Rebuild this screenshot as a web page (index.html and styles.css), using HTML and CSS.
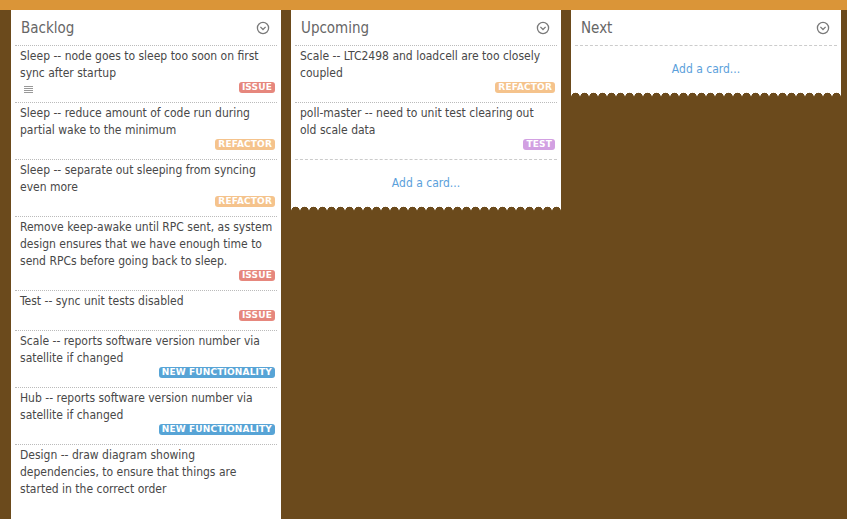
FILE: index.html
```html
<!DOCTYPE html>
<html>
<head>
<meta charset="utf-8">
<link rel="stylesheet" href="styles.css">
</head>
<body>
<div class="topbar"></div>
<div class="board">
  <section class="list list-tall">
    <header class="list-head"><h2>Backlog</h2><svg class="chev" viewBox="0 0 14 14"><circle cx="7" cy="7" r="5.6"/><path d="M4.4 5.9 L7 8.5 L9.6 5.9"/></svg></header>
    <div class="card"><p>Sleep -- node goes to sleep too soon on first sync after startup</p><div class="meta"><span class="desc"><i></i><i></i><i></i><i></i></span><span class="lbl issue">ISSUE</span></div></div>
    <div class="card"><p>Sleep -- reduce amount of code run during partial wake to the minimum</p><div class="meta"><span class="lbl refactor">REFACTOR</span></div></div>
    <div class="card"><p>Sleep -- separate out sleeping from syncing even more</p><div class="meta"><span class="lbl refactor">REFACTOR</span></div></div>
    <div class="card"><p>Remove keep-awake until RPC sent, as system design ensures that we have enough time to send RPCs before going back to sleep.</p><div class="meta"><span class="lbl issue">ISSUE</span></div></div>
    <div class="card"><p>Test -- sync unit tests disabled</p><div class="meta"><span class="lbl issue">ISSUE</span></div></div>
    <div class="card"><p>Scale -- reports software version number via satellite if changed</p><div class="meta"><span class="lbl newf">NEW FUNCTIONALITY</span></div></div>
    <div class="card"><p>Hub -- reports software version number via satellite if changed</p><div class="meta"><span class="lbl newf">NEW FUNCTIONALITY</span></div></div>
    <div class="card"><p>Design -- draw diagram showing dependencies, to ensure that things are started in the correct order</p></div>
  </section>
  <section class="list">
    <header class="list-head"><h2>Upcoming</h2><svg class="chev" viewBox="0 0 14 14"><circle cx="7" cy="7" r="5.6"/><path d="M4.4 5.9 L7 8.5 L9.6 5.9"/></svg></header>
    <div class="card"><p>Scale -- LTC2498 and loadcell are too closely coupled</p><div class="meta"><span class="lbl refactor">REFACTOR</span></div></div>
    <div class="card"><p>poll-master -- need to unit test clearing out<br>old scale data</p><div class="meta"><span class="lbl test">TEST</span></div></div>
    <div class="add">Add a card...</div>
    <div class="wave"></div>
  </section>
  <section class="list">
    <header class="list-head"><h2>Next</h2><svg class="chev" viewBox="0 0 14 14"><circle cx="7" cy="7" r="5.6"/><path d="M4.4 5.9 L7 8.5 L9.6 5.9"/></svg></header>
    <div class="add">Add a card...</div>
    <div class="wave"></div>
  </section>
</div>
</body>
</html>
```
FILE: styles.css
```css
html, body {
  margin: 0;
  padding: 0;
  height: 100%;
  overflow: hidden;
}
body {
  background: #6b4a1c;
  font-family: "DejaVu Sans Condensed", "Liberation Sans", Arial, sans-serif;
  color: #444;
}
.topbar {
  height: 10px;
  background: #da9538;
}
.board {
  display: flex;
  align-items: flex-start;
  gap: 10px;
  padding: 0 6px 0 11px;
  height: calc(100% - 10px);
}
.list {
  width: 270px;
  flex: none;
  background: #fff;
}
.list-tall {
  align-self: stretch;
}
.list-head {
  height: 35px;
  display: flex;
  align-items: center;
  justify-content: space-between;
  padding: 0 11px 0 10px;
}
.list-head h2 {
  margin: 0;
  font-size: 15px;
  font-weight: normal;
  color: #666;
}
.chev {
  width: 14px;
  height: 14px;
  fill: none;
  stroke: #7a7a7a;
  stroke-width: 1.3;
}
.card {
  margin: 0 4px;
  border-top: 1px dotted #bbb;
  padding: 2px 2px 9px 5px;
}
.card p {
  margin: 0;
  font-size: 12px;
  line-height: 17px;
  color: #484848;
}
.meta {
  height: 11px;
  display: flex;
  justify-content: flex-end;
  align-items: flex-start;
}
.desc {
  margin-right: auto;
  margin-left: 4px;
  margin-top: 4px;
  display: flex;
  flex-direction: column;
  gap: 1px;
  width: 9px;
}
.desc i {
  display: block;
  height: 1px;
  background: #999;
}
.lbl {
  font-family: "DejaVu Sans", Verdana, sans-serif;
  font-weight: bold;
  font-size: 9px;
  line-height: 11px;
  height: 11px;
  padding: 0 3px;
  letter-spacing: 0.15px;
  border-radius: 3px;
  color: #fff;
}
.issue { background: #e6877d; }
.refactor { background: #f5c38c; }
.test { background: #d2a0e2; }
.newf { background: #57a4d6; }
.add {
  margin: 0 4px;
  border-top: 1px dashed #ccc;
  padding: 15px 0 14px;
  text-align: center;
  font-size: 12px;
  line-height: 17px;
  color: #5b9fdb;
}
.wave {
  height: 5px;
  background: radial-gradient(circle at 4.5px 5px, #6b4a1c 4px, #fff 4.6px) 0 0 / 9px 5px repeat-x;
}
```
